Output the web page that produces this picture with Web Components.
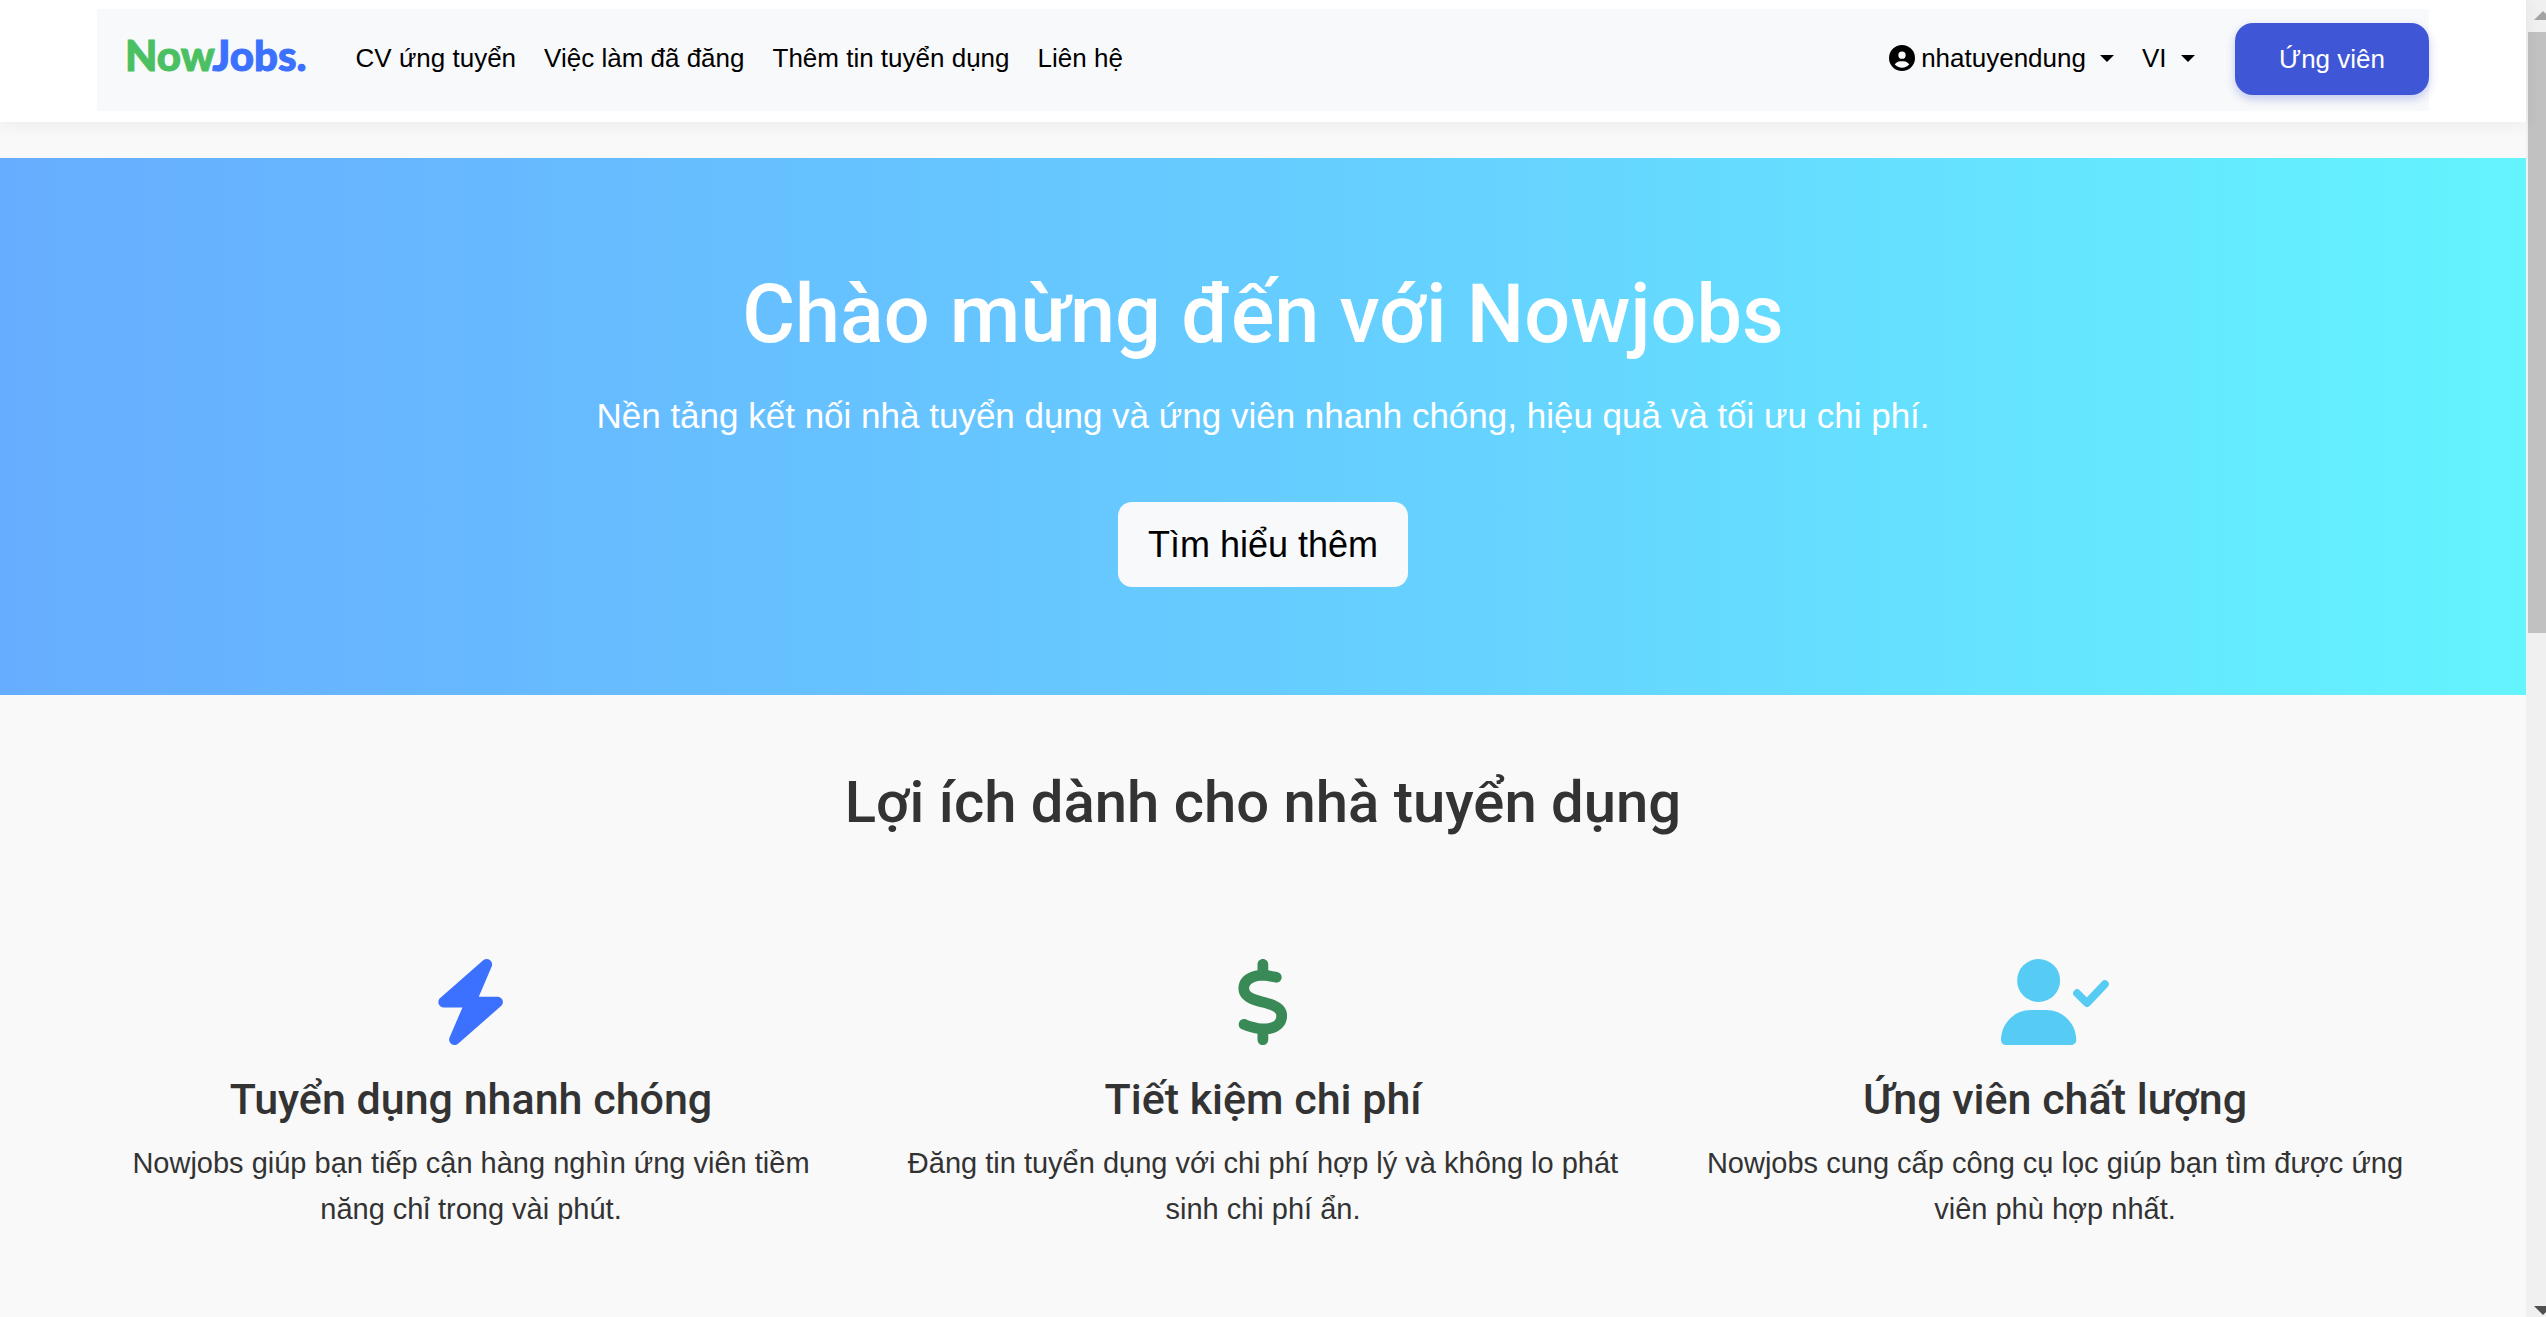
<!DOCTYPE html>
<html lang="vi">
<head>
<meta charset="utf-8">
<meta name="viewport" content="width=device-width, initial-scale=1">
<title>NowJobs</title>
<style>
  body {
    margin: 0;
    color: #333;
    background: #f9f9f9;
    font: 26px/40px "Liberation Sans", Arial, sans-serif;
  }
</style>
</head>
<body>
<app-shell>
  <site-header>
    <nav-link href="#cv">CV ứng tuyển</nav-link>
    <nav-link href="#jobs">Việc làm đã đăng</nav-link>
    <nav-link href="#add">Thêm tin tuyển dụng</nav-link>
    <nav-link href="#contact">Liên hệ</nav-link>
    <user-menu slot="tools">nhatuyendung</user-menu>
    <language-select slot="tools"></language-select>
    <role-button slot="tools">Ứng viên</role-button>
  </site-header>

  <hero-banner>
    <span slot="title">Chào mừng đến với Nowjobs</span>
    Nền tảng kết nối nhà tuyển dụng và ứng viên nhanh chóng, hiệu quả và tối ưu chi phí.
    <span slot="action">Tìm hiểu thêm</span>
  </hero-banner>

  <feature-section>
    <span slot="title">Lợi ích dành cho nhà tuyển dụng</span>
    <feature-card icon="bolt">
      <span slot="title">Tuyển dụng nhanh chóng</span>
      Nowjobs giúp bạn tiếp cận hàng nghìn ứng viên tiềm năng chỉ trong vài phút.
    </feature-card>
    <feature-card icon="dollar">
      <span slot="title">Tiết kiệm chi phí</span>
      Đăng tin tuyển dụng với chi phí hợp lý và không lo phát sinh chi phí ẩn.
    </feature-card>
    <feature-card icon="userCheck">
      <span slot="title">Ứng viên chất lượng</span>
      Nowjobs cung cấp công cụ lọc giúp bạn tìm được ứng viên phù hợp nhất.
    </feature-card>
  </feature-section>
</app-shell>

<script>
const ICONS = {
  bolt: {
    width: 448,
    color: '#3b71fe',
    shapes: '<path d="M349.4 44.6c5.9-13.7 1.5-29.7-10.6-38.5s-28.6-8-39.9 1.8l-256 224c-10 8.8-13.6 22.9-8.9 35.3S50.7 288 64 288H175.5L98.6 467.4c-5.9 13.7-1.5 29.7 10.6 38.5s28.6 8 39.9-1.8l256-224c10-8.8 13.6-22.9 8.9-35.3s-16.6-20.7-30-20.7H272.5L349.4 44.6z"/>',
  },
  dollar: {
    width: 320,
    color: '#3a8a57',
    shapes: '<path d="M160 0c17.7 0 32 14.3 32 32V67.7c1.6 .2 3.1 .4 4.7 .7c.4 .1 .7 .1 1.1 .2l48 8.8c17.4 3.2 28.9 19.9 25.7 37.2s-19.9 28.9-37.2 25.7l-47.5-8.7c-31.3-4.6-58.9-1.5-78.3 6.2s-27.2 18.3-29 28.1c-2 10.7-.5 16.7 1.2 20.4c1.8 3.9 5.5 8.3 12.8 13.2c16.3 10.7 41.3 17.7 73.7 26.3l2.9 .8c28.6 7.6 63.6 16.8 89.6 33.8c14.2 9.3 27.6 21.9 35.9 39.5c8.5 17.9 10.3 37.9 6.4 59.2c-6.9 38-33.1 63.4-65.6 76.7c-13.7 5.6-28.6 9.2-44.4 11V480c0 17.7-14.3 32-32 32s-32-14.3-32-32V445.1c-.4-.1-.9-.1-1.3-.2l-.2 0 0 0c-24.4-3.8-64.5-14.3-91.5-26.3c-16.1-7.2-23.4-26.1-16.2-42.2s26.1-23.4 42.2-16.2c20.9 9.3 55.3 18.5 75.2 21.6c31.9 4.7 58.2 2 76-5.3c16.9-6.9 24.6-16.9 26.8-28.9c1.9-10.6 .4-16.7-1.3-20.4c-1.9-4-5.6-8.4-13-13.3c-16.4-10.7-41.5-17.7-74-26.3l-2.8-.7 0 0C119.4 279.3 84.4 270 58.4 253c-14.2-9.3-27.5-22-35.8-39.6c-8.4-17.9-10.1-37.9-6.1-59.2C23.7 116 52.3 91.2 84.8 78.3c13.3-5.3 27.9-8.9 43.2-11V32c0-17.7 14.3-32 32-32z"/>',
  },
  userCheck: {
    width: 640,
    color: '#56cbf3',
    shapes: `
      <path d="M96 128a128 128 0 1 1 256 0A128 128 0 1 1 96 128zM0 482.3C0 383.8 79.8 304 178.3 304h91.4C368.2 304 448 383.8 448 482.3c0 16.4-13.3 29.7-29.7 29.7H29.7C13.3 512 0 498.7 0 482.3z"/>
      <path d="M453 204l59 58L618 150" fill="none" stroke="#56cbf3" stroke-width="47" stroke-linecap="round" stroke-linejoin="round"/>`,
  },
  circleUser: {
    width: 512,
    color: '#000',
    shapes: '<path d="M399 384.2C376.9 345.8 335.4 320 288 320H224c-47.4 0-88.9 25.8-111 64.2c35.2 39.2 86.2 63.8 143 63.8s107.8-24.7 143-63.8zM0 256a256 256 0 1 1 512 0A256 256 0 1 1 0 256zm256 16a72 72 0 1 0 0-144 72 72 0 1 0 0 144z"/>',
  },
};

const icon = (name) => {
  const { width, color, shapes } = ICONS[name];
  return `<svg viewBox="0 0 ${width} 512" fill="${color}" overflow="visible" aria-hidden="true">${shapes}</svg>`;
};

const CARET = '<svg class="caret" viewBox="0 0 14 7" aria-hidden="true"><path d="M0 0h14L7 7z"/></svg>';

/** Base for elements that only need to render a template once. */
class BaseElement extends HTMLElement {
  constructor() {
    super();

    this.attachShadow({ mode: 'open' });
  }

  connectedCallback() {
    this.shadowRoot.innerHTML = this.template();
  }
}

class AppShell extends BaseElement {
  template() {
    return `
      <style>
        :host {
          display: flex;
          min-height: 100vh;
        }
        main {
          flex: 1;
          min-width: 0;
        }
      </style>

      <main><slot></slot></main>
      <scroll-rail></scroll-rail>
    `;
  }
}

class ScrollRail extends BaseElement {
  template() {
    return `
      <style>
        :host {
          display: flex;
          flex-direction: column;
          width: 20px;
          overflow: hidden;
          background: #f0f0f0;
        }
        svg {
          flex: none;
          display: block;
        }
        .track {
          flex: 1;
        }
        .thumb {
          height: 48%;
          margin-left: 2px;
          background: #c1c1c1;
        }
      </style>

      <svg width="30" height="32" fill="#a3a3a3"><path d="M8 20h18l-9-9z"/></svg>
      <div class="track"><div class="thumb"></div></div>
      <svg width="30" height="32" fill="#505050"><path d="M8 21h18l-9 9z"/></svg>
    `;
  }
}

class SiteHeader extends BaseElement {
  template() {
    return `
      <style>
        :host {
          display: block;
          position: relative;
          padding: 9px 97px 11px;
          margin-bottom: 36px;
          background: #fff;
          box-shadow: 0 3px 16px rgba(0, 0, 0, .06);
        }
        nav {
          display: flex;
          align-items: center;
          padding: 14px 0 16px 28px;
          background: #f8f9fa;
        }
        .logo {
          margin-right: 35px;
          padding-bottom: 8px;
          color: #4bc063;
          font: 900 42px/50px Lato, sans-serif;
          text-decoration: none;
          -webkit-text-stroke: 1px;
        }
        .logo b {
          font-weight: 900;
          color: #3b71fe;
        }
        .links {
          display: flex;
          flex: 1;
          padding-bottom: 2px;
        }
        .tools {
          display: flex;
          align-items: center;
        }
      </style>

      <nav>
        <a class="logo" href="#home">Now<b>Jobs.</b></a>
        <div class="links"><slot></slot></div>
        <div class="tools"><slot name="tools"></slot></div>
      </nav>
    `;
  }
}

class NavLink extends BaseElement {
  template() {
    return `
      <style>
        :host {
          display: block;
          padding: 0 14px;
        }
        a {
          color: #000;
          text-decoration: none;
          white-space: nowrap;
        }
      </style>

      <a href="${this.getAttribute('href')}"><slot></slot></a>
    `;
  }
}

class UserMenu extends BaseElement {
  template() {
    return `
      <style>
        :host {
          display: block;
          padding-bottom: 2px;
        }
        button {
          display: flex;
          align-items: center;
          padding: 0;
          border: 0;
          background: none;
          color: #000;
          font: inherit;
        }
        svg {
          width: 26px;
          height: 26px;
          margin-right: 6px;
        }
        .caret {
          width: 14px;
          height: 7px;
          margin: 0 0 0 14px;
        }
      </style>

      <button type="button" aria-haspopup="menu">${icon('circleUser')}<slot></slot>${CARET}</button>
    `;
  }
}

class LanguageSelect extends BaseElement {
  template() {
    return `
      <style>
        :host {
          display: block;
          margin: 0 40px 0 28px;
          padding-bottom: 2px;
        }
        label {
          display: flex;
          align-items: center;
        }
        select {
          appearance: none;
          padding: 0;
          border: 0;
          background: none;
          color: #000;
          font: inherit;
        }
        .caret {
          width: 14px;
          height: 7px;
          margin-left: 14px;
        }
      </style>

      <label>
        <select aria-label="Ngôn ngữ"><option>VI</option></select>
        ${CARET}
      </label>
    `;
  }
}

class RoleButton extends BaseElement {
  template() {
    return `
      <style>
        :host {
          display: block;
        }
        button {
          display: block;
          padding: 16px 44px;
          border: 0;
          border-radius: 18px;
          background: #3f57d7;
          box-shadow: 0 4px 10px rgba(63, 87, 215, .3);
          color: #fff;
          font: inherit;
        }
      </style>

      <button type="button"><slot></slot></button>
    `;
  }
}

class HeroBanner extends BaseElement {
  template() {
    return `
      <style>
        :host {
          display: flex;
          flex-direction: column;
          align-items: center;
          position: relative;
          padding: 108px 40px;
          background: linear-gradient(to right, #67adff, #6cf, #64f4ff);
          color: #fff;
          text-align: center;
        }
        h1 {
          margin: 0 0 24px;
          font: 500 81px/98px Roboto, sans-serif;
        }
        p {
          margin: 0 0 58px;
          font-size: 35px;
          line-height: 56px;
        }
        button {
          padding: 14px 30px;
          border: 0;
          border-radius: 14px;
          background: #f8f9fa;
          color: #000;
          font: inherit;
          font-size: 36px;
          line-height: 57px;
        }
      </style>

      <h1><slot name="title"></slot></h1>
      <p><slot></slot></p>
      <button type="button"><slot name="action"></slot></button>
    `;
  }
}

class FeatureSection extends BaseElement {
  template() {
    return `
      <style>
        :host {
          display: block;
          max-width: 2376px;
          margin: 0 auto;
          padding: 72px 0;
        }
        h2 {
          margin: 0 0 122px;
          font: 500 58px/70px Roboto, sans-serif;
          text-align: center;
        }
        .grid {
          display: grid;
          grid-template-columns: repeat(3, 1fr);
        }
      </style>

      <h2><slot name="title"></slot></h2>
      <div class="grid"><slot></slot></div>
    `;
  }
}

class FeatureCard extends BaseElement {
  template() {
    return `
      <style>
        :host {
          display: block;
          padding: 0 40px;
          text-align: center;
        }
        svg {
          display: block;
          height: 86px;
          margin: 0 auto 29px;
        }
        h3 {
          margin: 0 0 16px;
          font: 500 43px/50px Roboto, sans-serif;
        }
        p {
          margin: 0;
          font-size: 29px;
          line-height: 46px;
        }
      </style>

      ${icon(this.getAttribute('icon'))}
      <h3><slot name="title"></slot></h3>
      <p><slot></slot></p>
    `;
  }
}

customElements.define('app-shell', AppShell);
customElements.define('scroll-rail', ScrollRail);
customElements.define('site-header', SiteHeader);
customElements.define('nav-link', NavLink);
customElements.define('user-menu', UserMenu);
customElements.define('language-select', LanguageSelect);
customElements.define('role-button', RoleButton);
customElements.define('hero-banner', HeroBanner);
customElements.define('feature-section', FeatureSection);
customElements.define('feature-card', FeatureCard);
</script>
</body>
</html>
